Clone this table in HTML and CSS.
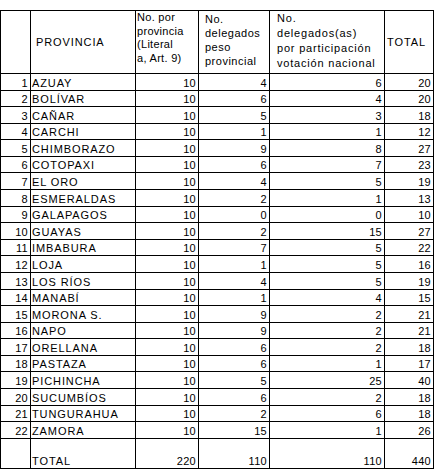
FILE: index.html
```html
<!DOCTYPE html>
<html>
<head>
<meta charset="utf-8">
<link rel="stylesheet" href="styles.css">
</head>
<body>
<div class="sheet">
  <div class="c"></div>
  <div class="c hp w">PROVINCIA</div>
  <div class="c h3"><span class="t">No. por<br>provincia<br>(Literal<br>a, Art. 9)</span></div>
  <div class="c h4"><span class="t">No.<br>delegados<br>peso<br>provincial</span></div>
  <div class="c h5"><span class="t">No.<br>delegados(as)<br>por participación<br>votación nacional</span></div>
  <div class="c ht w">TOTAL</div>

  <div class="c r">1</div><div class="c w">AZUAY</div><div class="c r">10</div><div class="c r">4</div><div class="c r">6</div><div class="c r">20</div>
  <div class="c r">2</div><div class="c w">BOLÍVAR</div><div class="c r">10</div><div class="c r">6</div><div class="c r">4</div><div class="c r">20</div>
  <div class="c r">3</div><div class="c w">CAÑAR</div><div class="c r">10</div><div class="c r">5</div><div class="c r">3</div><div class="c r">18</div>
  <div class="c r">4</div><div class="c w">CARCHI</div><div class="c r">10</div><div class="c r">1</div><div class="c r">1</div><div class="c r">12</div>
  <div class="c r">5</div><div class="c w">CHIMBORAZO</div><div class="c r">10</div><div class="c r">9</div><div class="c r">8</div><div class="c r">27</div>
  <div class="c r">6</div><div class="c w">COTOPAXI</div><div class="c r">10</div><div class="c r">6</div><div class="c r">7</div><div class="c r">23</div>
  <div class="c r">7</div><div class="c w">EL ORO</div><div class="c r">10</div><div class="c r">4</div><div class="c r">5</div><div class="c r">19</div>
  <div class="c r">8</div><div class="c w">ESMERALDAS</div><div class="c r">10</div><div class="c r">2</div><div class="c r">1</div><div class="c r">13</div>
  <div class="c r">9</div><div class="c w">GALAPAGOS</div><div class="c r">10</div><div class="c r">0</div><div class="c r">0</div><div class="c r">10</div>
  <div class="c r">10</div><div class="c w">GUAYAS</div><div class="c r">10</div><div class="c r">2</div><div class="c r">15</div><div class="c r">27</div>
  <div class="c r">11</div><div class="c w">IMBABURA</div><div class="c r">10</div><div class="c r">7</div><div class="c r">5</div><div class="c r">22</div>
  <div class="c r">12</div><div class="c w">LOJA</div><div class="c r">10</div><div class="c r">1</div><div class="c r">5</div><div class="c r">16</div>
  <div class="c r">13</div><div class="c w">LOS RÍOS</div><div class="c r">10</div><div class="c r">4</div><div class="c r">5</div><div class="c r">19</div>
  <div class="c r">14</div><div class="c w">MANABÍ</div><div class="c r">10</div><div class="c r">1</div><div class="c r">4</div><div class="c r">15</div>
  <div class="c r">15</div><div class="c w">MORONA S.</div><div class="c r">10</div><div class="c r">9</div><div class="c r">2</div><div class="c r">21</div>
  <div class="c r">16</div><div class="c w">NAPO</div><div class="c r">10</div><div class="c r">9</div><div class="c r">2</div><div class="c r">21</div>
  <div class="c r">17</div><div class="c w">ORELLANA</div><div class="c r">10</div><div class="c r">6</div><div class="c r">2</div><div class="c r">18</div>
  <div class="c r">18</div><div class="c w">PASTAZA</div><div class="c r">10</div><div class="c r">6</div><div class="c r">1</div><div class="c r">17</div>
  <div class="c r">19</div><div class="c w">PICHINCHA</div><div class="c r">10</div><div class="c r">5</div><div class="c r">25</div><div class="c r">40</div>
  <div class="c r">20</div><div class="c w">SUCUMBÍOS</div><div class="c r">10</div><div class="c r">6</div><div class="c r">2</div><div class="c r">18</div>
  <div class="c r">21</div><div class="c w">TUNGURAHUA</div><div class="c r">10</div><div class="c r">2</div><div class="c r">6</div><div class="c r">18</div>
  <div class="c r">22</div><div class="c w">ZAMORA</div><div class="c r">10</div><div class="c r">15</div><div class="c r">1</div><div class="c r">26</div>

  <div class="c"></div><div class="c w">TOTAL</div><div class="c r">220</div><div class="c r">110</div><div class="c r">110</div><div class="c r">440</div>
</div>
</body>
</html>
```

FILE: styles.css
```css
body {
  margin: 0;
  background: #fff;
  color: #000;
  font-family: "Liberation Sans", Arial, sans-serif;
  font-size: 11px;
}

.sheet {
  display: grid;
  grid-template-columns: 30px 105px 63px 71px 115px 49px;
  grid-template-rows: 63px repeat(22, 16.59px) 30px;
  width: max-content;
  margin-top: 10px;
  border-top: 1px solid #000;
  border-left: 1px solid #000;
}

.c {
  box-sizing: border-box;
  border-right: 1px solid #000;
  border-bottom: 1px solid #000;
  display: flex;
  align-items: flex-end;
  padding: 0 2px 0 1px;
  line-height: 13px;
  white-space: nowrap;
  overflow: hidden;
  letter-spacing: 0.3px;
}

.w {
  letter-spacing: 0.9px;
}

.r {
  justify-content: flex-end;
}

.t {
  display: block;
}

.hp {
  align-items: center;
  padding-left: 5px;
}

.h3 {
  align-items: flex-start;
  line-height: 13.6px;
  padding-left: 1px;
}

.h4 {
  align-items: flex-start;
  line-height: 14px;
  padding-top: 1px;
  padding-left: 6px;
  letter-spacing: 0.5px;
}

.h5 {
  align-items: flex-start;
  line-height: 15px;
  padding-left: 7px;
  letter-spacing: 0.8px;
}

.ht {
  align-items: center;
  padding-left: 2px;
}
```
